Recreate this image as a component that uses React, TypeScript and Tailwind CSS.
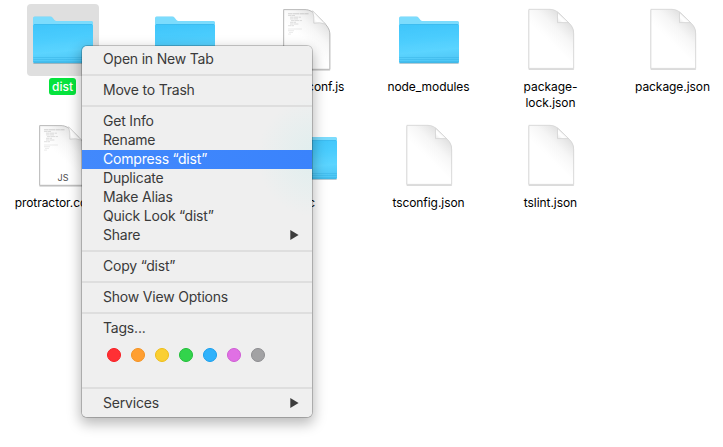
import React from "react";

type Kind = "folder" | "file" | "script" | "empty";
type Item = { kind: Kind; label: string; selected?: boolean; badge?: string };

const items: Item[] = [
  { kind: "folder", label: "dist", selected: true },
  { kind: "folder", label: "" },
  { kind: "script", label: "karma.conf.js" },
  { kind: "folder", label: "node_modules" },
  { kind: "file", label: "package-\nlock.json" },
  { kind: "file", label: "package.json" },
  { kind: "script", label: "protractor.conf.js", badge: "JS" },
  { kind: "empty", label: "" },
  { kind: "folder", label: "src" },
  { kind: "file", label: "tsconfig.json" },
  { kind: "file", label: "tslint.json" },
];

function Defs() {
  return (
    <svg className="absolute h-0 w-0" aria-hidden="true">
      <defs>
        <linearGradient id="body" x1="0" y1="0" x2="0.15" y2="1">
          <stop offset="0" stopColor="#3fc5fa" />
          <stop offset="0.35" stopColor="#48cbfd" />
          <stop offset="0.75" stopColor="#5bd4ff" />
          <stop offset="1" stopColor="#50c8f6" />
        </linearGradient>
        <linearGradient id="page" gradientUnits="userSpaceOnUse" x1="50" y1="13" x2="30" y2="34">
          <stop offset="0" stopColor="#dedede" />
          <stop offset="0.25" stopColor="#ebebeb" />
          <stop offset="0.5" stopColor="#f6f6f6" />
          <stop offset="0.8" stopColor="#fcfcfc" />
          <stop offset="1" stopColor="#ffffff" />
        </linearGradient>
        <linearGradient id="curl" x1="0" y1="1" x2="0.6" y2="0.4">
          <stop offset="0" stopColor="#e8e8e8" />
          <stop offset="0.5" stopColor="#ffffff" />
          <stop offset="1" stopColor="#f6f6f6" />
        </linearGradient>
        <filter id="soft" x="-10%" y="-10%" width="120%" height="120%">
          <feDropShadow dx="0" dy="0.6" stdDeviation="0.6" floodColor="#000" floodOpacity="0.28" />
        </filter>
      </defs>
    </svg>
  );
}

function Folder() {
  return (
    <svg width="72" height="72" viewBox="0 0 72 72">
      <g filter="url(#soft)">
        <path d="M6 14.2Q6 12.6 7.6 12.6H23.2Q24.8 12.6 25.6 13.7L27.6 16.2Q28.2 17 29.3 17H64.5Q66 17 66 18.5V57.5Q66 59 64.5 59H7.5Q6 59 6 57.5Z" fill="#7bdcfd" />
        <path d="M6 21.8Q6 20.2 7.6 20.2H64.4Q66 20.2 66 21.8V57.5Q66 59 64.5 59H7.5Q6 59 6 57.5Z" fill="url(#body)" />
      </g>
      <path d="M7 20.5H65" stroke="#39b7ee" strokeWidth="0.8" />
      <path d="M6.3 53.5H65.7M6.3 55.5H65.7M6.3 57.5H65.7" stroke="#38b4e6" strokeWidth="0.8" opacity="0.65" />
      <path d="M7 58.8H65" stroke="#36a7d8" strokeWidth="0.7" />
    </svg>
  );
}

function File() {
  return (
    <svg width="72" height="72" viewBox="0 0 72 72">
      <g filter="url(#soft)">
        <path d="M13.9 5.4H35C39 5.4 41.6 7 44.6 9.8L53.6 18.6C56.8 21.8 58.6 24.6 58.6 29V64.4H13.9Z" fill="url(#page)" stroke="#d6d6d6" strokeWidth="0.8" />
      </g>
      <path d="M42.5 8.2V18.6H53.6Z" fill="url(#curl)" stroke="#d3d3d3" strokeWidth="0.8" />
    </svg>
  );
}

function ScriptFile({ badge }: { badge?: string }) {
  return (
    <svg width="72" height="72" viewBox="0 0 72 72">
      <g filter="url(#soft)">
        <path d="M12.7 5.6H34C39 5.6 43 8.6 46.5 12.2L52 17.6C56 21.7 58.8 25.2 58.8 30V65.3H12.7Z" fill="url(#page)" stroke="#b4b4b4" strokeWidth="0.9" />
      </g>
      <path d="M41.6 6.7Q43.4 13 42.8 19.2Q49 17.8 54.6 20.2Z" fill="url(#curl)" stroke="#c9c9c9" strokeWidth="0.7" />
      <g stroke="#777" strokeWidth="0.6" opacity="0.55">
        <path d="M17 9.8H37.5" strokeDasharray="4 .4 7 .5" />
        <path d="M17 11.5H24M19 13.2H30M19 14.9H27M20 16.6H31M19 18.3H25M19 20H28M17 21.7H23" strokeDasharray="3 .4 5 .6" opacity="0.7" />
        <path d="M17 25H31M17 26.7H23M18 28.4H22M17 30.1H20" opacity="0.45" />
      </g>
      {badge && (
        <text x="36" y="61.4" textAnchor="middle" fontSize="9" fontFamily="Inter, sans-serif" fill="#4c4c4c">
          {badge}
        </text>
      )}
    </svg>
  );
}

function Cell({ item }: { item: Item }) {
  return (
    <div className="flex h-[116px] w-[122px] flex-col items-center">
      <div className={item.selected ? "h-[72px] w-[72px] rounded-[4px] bg-[#dfdfdf]" : "h-[72px] w-[72px]"}>
        {item.kind === "folder" && <Folder />}
        {item.kind === "file" && <File />}
        {item.kind === "script" && <ScriptFile badge={item.badge} />}
      </div>
      {item.selected ? (
        <div className="mt-[2px] mr-px flex h-[17px] w-[27px] items-center justify-center rounded-[3px] bg-[#06e33d] text-[12px] font-medium text-white">
          {item.label}
        </div>
      ) : (
        <div className="mt-[3px] mr-px text-center text-[12px] leading-[16px] tracking-[-0.06px] whitespace-pre text-black">{item.label}</div>
      )}
    </div>
  );
}

function Row({ label, active, arrow }: { label: string; active?: boolean; arrow?: boolean }) {
  return (
    <div
      className={`flex h-[19px] items-center justify-between pr-[13px] pl-[21px] text-[14px] tracking-[-0.2px] ${
        active ? "bg-linear-to-r from-[#4289fc] to-[#3a83fc] text-white" : "text-[#3a3a3a]"
      }`}
    >
      <span className="pb-[2px] leading-[17px] whitespace-nowrap">{label}</span>
      {arrow && (
        <svg className="mb-px" width="9" height="10" viewBox="0 0 9 10">
          <path d="M0.3 0L8.6 5L0.3 10Z" fill="#3c3c3c" />
        </svg>
      )}
    </div>
  );
}

function Separator() {
  return (
    <div className="flex h-3 flex-col justify-center">
      <div className="h-[2px] bg-[#dedede]" />
    </div>
  );
}

const tags = [
  "bg-[#ff3034] border-[#f71d22]",
  "bg-[#ff9f32] border-[#f49220]",
  "bg-[#facf32] border-[#eebd18]",
  "bg-[#32d44c] border-[#20be38]",
  "bg-[#30b2fb] border-[#199eed]",
  "bg-[#e070e4] border-[#cf5cd4]",
  "bg-[#a2a2a4] border-[#8d8d90]",
];

function Menu() {
  return (
    <div className="absolute top-[46px] left-[82px] h-[371px] w-[230px] overflow-hidden rounded-[5px] bg-[#efefef] bg-[radial-gradient(circle_at_235px_111px,#dfeeee_0px,#efefef_60px)] py-1">
      <Row label="Open in New Tab" />
      <Separator />
      <Row label="Move to Trash" />
      <Separator />
      <Row label="Get Info" />
      <Row label="Rename" />
      <Row label="Compress “dist”" active />
      <Row label="Duplicate" />
      <Row label="Make Alias" />
      <Row label="Quick Look “dist”" />
      <Row label="Share" arrow />
      <Separator />
      <Row label="Copy “dist”" />
      <Separator />
      <Row label="Show View Options" />
      <Separator />
      <Row label="Tags..." />
      <div className="flex h-11 gap-[10px] pt-[10px] pl-[25px]">
        {tags.map((tag) => (
          <span key={tag} className={`h-[14px] w-[14px] rounded-full border ${tag}`} />
        ))}
      </div>
      <Separator />
      <Row label="Services" arrow />
    </div>
  );
}

export default function App() {
  return (
    <main className="relative h-[447px] w-[723px] overflow-hidden bg-white font-['Inter',sans-serif]">
      <Defs />
      <div className="-ml-px grid w-[735px] grid-cols-[repeat(6,122px)] pt-1 pl-[3px]">
        {items.map((item, i) => (
          <Cell key={i} item={item} />
        ))}
      </div>
      <div className="absolute top-[46px] left-[82px] h-[371px] w-[230px] rounded-[5px] shadow-[0_0_0_1px_rgba(0,0,0,0.2),0_5px_13px_2px_rgba(0,0,0,0.27)]" />
      <Menu />
    </main>
  );
}
